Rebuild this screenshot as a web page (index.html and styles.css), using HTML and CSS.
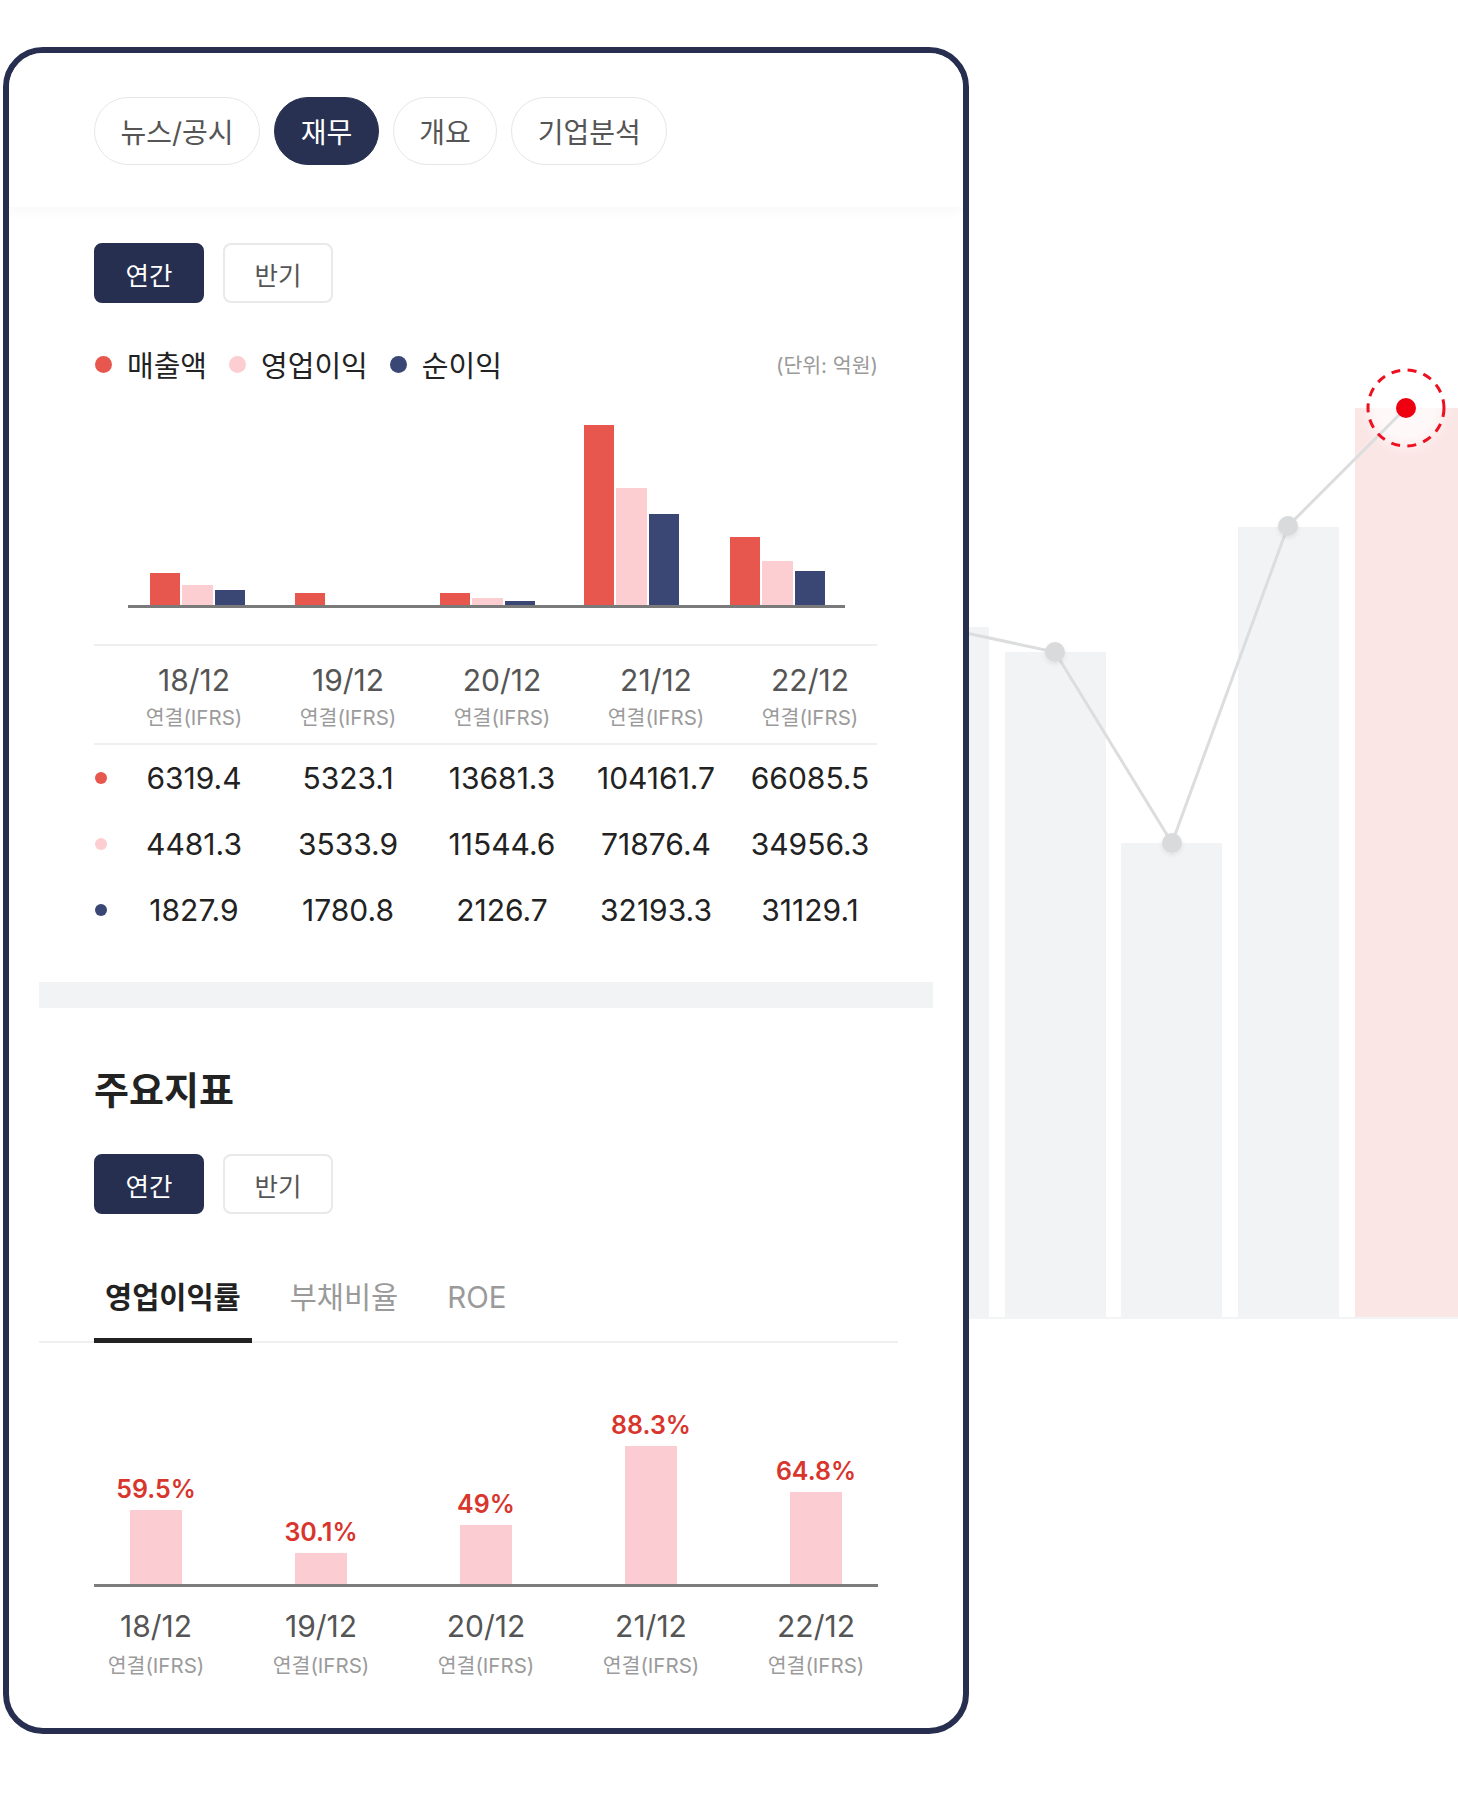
FILE: index.html
```html
<!DOCTYPE html>
<html lang="ko">
<head>
<meta charset="utf-8">
<title>재무</title>
<link rel="stylesheet" href="styles.css">
</head>
<body>
<div class="page">
  <svg class="deco" width="588" height="942" viewBox="0 0 588 942" aria-hidden="true">
    <defs>
      <filter id="soft" x="-50%" y="-50%" width="200%" height="200%"><feGaussianBlur stdDeviation="6"/></filter>
      <filter id="dsh" x="-50%" y="-50%" width="200%" height="200%"><feDropShadow dx="0" dy="2" stdDeviation="2" flood-color="#000" flood-opacity="0.08"/></filter>
    </defs>
    <rect x="0" y="937" width="588" height="2" fill="#f3f4f6"/>
    <rect x="18" y="247" width="101" height="690" fill="#f2f3f5"/>
    <rect x="135" y="272" width="101" height="665" fill="#f2f3f5"/>
    <rect x="251" y="463" width="101" height="474" fill="#f2f3f5"/>
    <rect x="368" y="147" width="101" height="790" fill="#f2f3f5"/>
    <rect x="485" y="28" width="103" height="909" fill="#fbe6e6"/>
    <circle cx="536" cy="28" r="38" fill="#fff" opacity="0.75" filter="url(#soft)"/>
    <polyline points="-40,224 68,247 185,272 302,463 418,146 536,28" fill="none" stroke="#dcdddf" stroke-width="3"/>
    <circle cx="185" cy="272" r="10" fill="#d9dadc" filter="url(#dsh)"/>
    <circle cx="302" cy="463" r="10" fill="#d9dadc" filter="url(#dsh)"/>
    <circle cx="418" cy="146" r="10" fill="#d9dadc" filter="url(#dsh)"/>
    <circle cx="536" cy="28" r="38" fill="none" stroke="#ee1020" stroke-width="3" stroke-dasharray="9 7.4"/>
    <circle cx="536" cy="28" r="10" fill="#ef0010"/>
  </svg>

  <section class="card">
    <header class="card-head">
      <nav class="pills">
        <span class="pill">뉴스/공시</span>
        <span class="pill is-active">재무</span>
        <span class="pill">개요</span>
        <span class="pill">기업분석</span>
      </nav>
    </header>

    <div class="fin">
      <div class="seg">
        <span class="seg-btn is-active">연간</span>
        <span class="seg-btn">반기</span>
      </div>

      <div class="legend">
        <div class="legend-items">
          <span class="lg"><i class="dot c-red"></i>매출액</span>
          <span class="lg"><i class="dot c-pink"></i>영업이익</span>
          <span class="lg"><i class="dot c-navy"></i>순이익</span>
        </div>
        <span class="unit">(단위: 억원)</span>
      </div>

      <svg class="fin-chart" width="784" height="226" viewBox="0 0 784 226" aria-hidden="true">
        <rect x="56" y="189" width="30" height="32" fill="#e8574e"/>
        <rect x="88" y="201" width="31" height="20" fill="#fccdd1"/>
        <rect x="121" y="206" width="30" height="15" fill="#3a4774"/>

        <rect x="201" y="209" width="30" height="12" fill="#e8574e"/>

        <rect x="346" y="209" width="30" height="12" fill="#e8574e"/>
        <rect x="378" y="214" width="31" height="7" fill="#fccdd1"/>
        <rect x="411" y="217" width="30" height="4" fill="#3a4774"/>

        <rect x="490" y="41" width="30" height="180" fill="#e8574e"/>
        <rect x="522" y="104" width="31" height="117" fill="#fccdd1"/>
        <rect x="555" y="130" width="30" height="91" fill="#3a4774"/>

        <rect x="636" y="153" width="30" height="68" fill="#e8574e"/>
        <rect x="668" y="177" width="31" height="44" fill="#fccdd1"/>
        <rect x="701" y="187" width="30" height="34" fill="#3a4774"/>

        <rect x="34" y="221" width="717" height="3" fill="#7a7a7a"/>
      </svg>

      <div class="fin-table">
        <div class="rule"></div>
        <div class="trow thead">
          <span></span>
          <div class="th"><span class="th-date">18/12</span><span class="th-sub">연결(IFRS)</span></div>
          <div class="th"><span class="th-date">19/12</span><span class="th-sub">연결(IFRS)</span></div>
          <div class="th"><span class="th-date">20/12</span><span class="th-sub">연결(IFRS)</span></div>
          <div class="th"><span class="th-date">21/12</span><span class="th-sub">연결(IFRS)</span></div>
          <div class="th"><span class="th-date">22/12</span><span class="th-sub">연결(IFRS)</span></div>
        </div>
        <div class="rule"></div>
        <div class="trow tdata">
          <i class="sdot c-red"></i>
          <span>6319.4</span><span>5323.1</span><span>13681.3</span><span>104161.7</span><span>66085.5</span>
        </div>
        <div class="trow tdata">
          <i class="sdot c-pink"></i>
          <span>4481.3</span><span>3533.9</span><span>11544.6</span><span>71876.4</span><span>34956.3</span>
        </div>
        <div class="trow tdata">
          <i class="sdot c-navy"></i>
          <span>1827.9</span><span>1780.8</span><span>2126.7</span><span>32193.3</span><span>31129.1</span>
        </div>
      </div>
    </div>

    <div class="band"></div>

    <div class="ind">
      <h2 class="ind-title">주요지표</h2>
      <div class="seg seg-ind">
        <span class="seg-btn is-active">연간</span>
        <span class="seg-btn">반기</span>
      </div>

      <div class="tabs">
        <span class="tab is-active">영업이익률</span>
        <span class="tab">부채비율</span>
        <span class="tab">ROE</span>
      </div>

      <div class="ind-chart">
        <div class="ind-bars">
          <div class="ib"><span class="ib-val">59.5%</span><span class="ib-bar" style="height:74px"></span></div>
          <div class="ib"><span class="ib-val">30.1%</span><span class="ib-bar" style="height:31px"></span></div>
          <div class="ib"><span class="ib-val">49%</span><span class="ib-bar" style="height:59px"></span></div>
          <div class="ib"><span class="ib-val">88.3%</span><span class="ib-bar" style="height:138px"></span></div>
          <div class="ib"><span class="ib-val">64.8%</span><span class="ib-bar" style="height:92px"></span></div>
        </div>
        <div class="ind-axis"></div>
        <div class="ind-labels">
          <div class="il"><span class="th-date">18/12</span><span class="th-sub">연결(IFRS)</span></div>
          <div class="il"><span class="th-date">19/12</span><span class="th-sub">연결(IFRS)</span></div>
          <div class="il"><span class="th-date">20/12</span><span class="th-sub">연결(IFRS)</span></div>
          <div class="il"><span class="th-date">21/12</span><span class="th-sub">연결(IFRS)</span></div>
          <div class="il"><span class="th-date">22/12</span><span class="th-sub">연결(IFRS)</span></div>
        </div>
      </div>
    </div>
  </section>
</div>
</body>
</html>
```

FILE: styles.css
```css
html, body {
  margin: 0;
  padding: 0;
  background: #ffffff;
}

body {
  font-family: Inter, "Noto Sans CJK KR", sans-serif;
  color: #222;
}

.page {
  position: relative;
  width: 1458px;
  height: 1800px;
  box-sizing: border-box;
  padding: 47px 0 0 3px;
  overflow: hidden;
}

.deco {
  position: absolute;
  left: 870px;
  top: 380px;
  z-index: 0;
  overflow: visible;
}

.card {
  position: relative;
  z-index: 1;
  width: 966px;
  height: 1687px;
  box-sizing: border-box;
  border: 6px solid #272e50;
  border-radius: 40px;
  background: #ffffff;
  overflow: hidden;
}

/* header pills */
.card-head {
  position: relative;
  z-index: 2;
  padding: 44px 0 42px 85px;
  background: #fff;
  box-shadow: 0 5px 10px rgba(0, 0, 0, 0.028);
}

.pills {
  display: flex;
  gap: 14px;
}

.pill {
  height: 68px;
  box-sizing: border-box;
  padding: 0 25.5px;
  border: 1.5px solid #e6e6e6;
  border-radius: 34px;
  display: flex;
  align-items: center;
  font-size: 28px;
  color: #555;
}

.pill.is-active {
  background: #283152;
  border-color: #283152;
  color: #fff;
}

/* financial section */
.fin {
  padding: 36px 0 0 85px;
}

.seg {
  display: flex;
  gap: 19px;
}

.seg-btn {
  width: 110px;
  height: 60px;
  box-sizing: border-box;
  border: 2px solid #e9e9e9;
  border-radius: 8px;
  display: flex;
  align-items: center;
  justify-content: center;
  font-size: 25.5px;
  color: #555;
}

.seg-btn.is-active {
  background: #272f51;
  border-color: #272f51;
  color: #fff;
}

.legend {
  margin-top: 41px;
  width: 784px;
  height: 40px;
  display: flex;
  align-items: center;
  justify-content: space-between;
}

.legend-items {
  display: flex;
  align-items: center;
}

.lg {
  display: flex;
  align-items: center;
  font-size: 29px;
  color: #222;
  margin-right: 21px;
}

.dot {
  width: 17px;
  height: 17px;
  border-radius: 50%;
  margin: 0 15px 0 1px;
}

.c-red { background: #e8574e; }
.c-pink { background: #fccdd1; }
.c-navy { background: #3a4774; }

.unit {
  font-size: 20.5px;
  color: #9a9a9a;
}

.fin-chart {
  display: block;
}

.fin-table {
  margin-top: 34px;
}

.rule {
  width: 783px;
  height: 2px;
  background: #efefef;
}

.trow {
  display: grid;
  grid-template-columns: 23px repeat(5, 154px);
  align-items: center;
  text-align: center;
}

.thead {
  padding: 16px 0 11px;
}

.th, .il {
  display: flex;
  flex-direction: column;
  align-items: center;
}

.th-date {
  font-size: 30px;
  line-height: 36px;
  color: #555;
}

.th-sub {
  margin-top: 6px;
  font-size: 20.5px;
  line-height: 28px;
  color: #9b9b9b;
}

.tdata {
  height: 66px;
  font-size: 30px;
  color: #222;
}

.sdot {
  width: 12px;
  height: 12px;
  border-radius: 50%;
  margin-left: 1px;
}

.band {
  margin: 39px 30px 0;
  height: 26px;
  background: #f2f3f5;
}

/* indicators */
.ind {
  padding: 57px 0 0 85px;
}

.ind-title {
  margin: 0;
  font-size: 38px;
  line-height: 50px;
  font-weight: 700;
  color: #222;
}

.seg-ind {
  margin-top: 39px;
}

.tabs {
  margin: 63px 0 0 -55px;
  width: 859px;
  box-sizing: border-box;
  padding-left: 55px;
  border-bottom: 2px solid #efefef;
  display: flex;
  gap: 27px;
}

.tab {
  font-size: 29.5px;
  line-height: 40px;
  padding: 0 11px 21px;
  margin-bottom: -2px;
  border-bottom: 5px solid transparent;
  color: #9a9a9a;
}

.tab.is-active {
  color: #222;
  font-weight: 700;
  border-bottom-color: #222;
}

.ind-chart {
  margin: 57px 0 0 -20.5px;
  width: 825px;
}

.ind-bars {
  display: flex;
  height: 184px;
  align-items: flex-end;
}

.ib {
  flex: 0 0 165px;
  display: flex;
  flex-direction: column;
  align-items: center;
}

.ib-val {
  font-size: 25px;
  line-height: 30px;
  font-weight: 600;
  color: #d8352d;
  margin-bottom: 6px;
}

.ib-bar {
  width: 52px;
  background: #fbcdd2;
}

.ind-axis {
  margin: 0 20.5px;
  height: 3px;
  background: #7c7c7c;
}

.ind-labels {
  display: flex;
  margin-top: 21px;
}

.il {
  flex: 0 0 165px;
}

.il .th-sub {
  margin-top: 8px;
}
```
